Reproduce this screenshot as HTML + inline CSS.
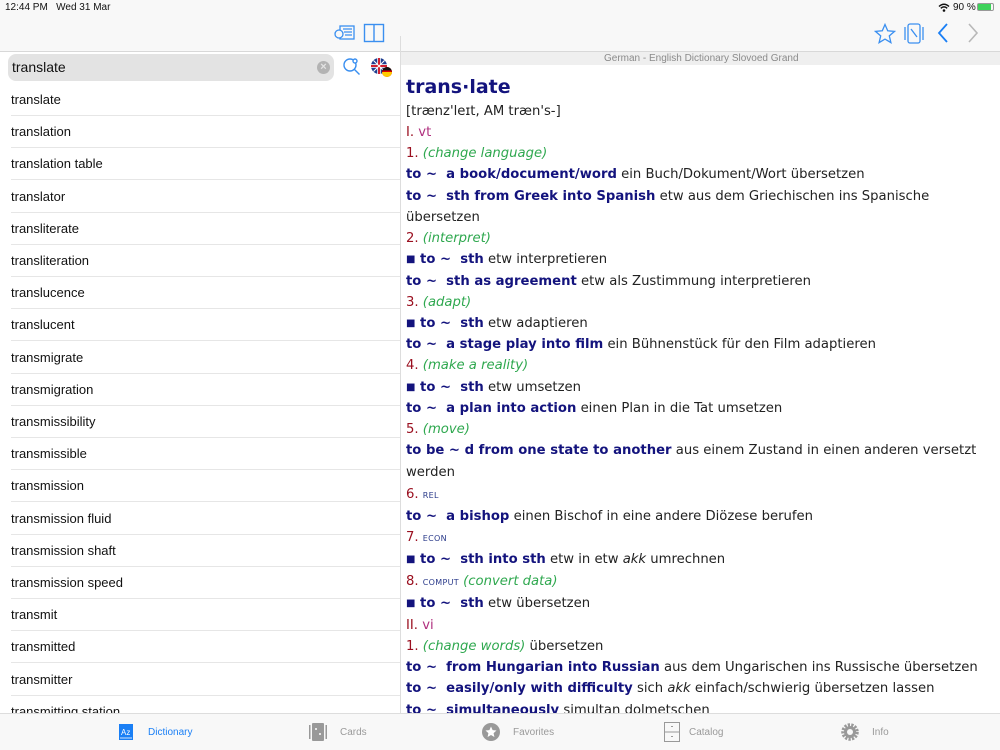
<!DOCTYPE html>
<html><head><meta charset="utf-8"><style>
*{margin:0;padding:0;box-sizing:border-box}
body{width:1000px;height:750px;overflow:hidden;background:#fff;font-family:"Liberation Sans",Arial,sans-serif;position:relative}
.abs{position:absolute}
.top{left:0;top:0;width:1000px;height:52px;background:#f8f8f8;border-bottom:1px solid #d8d8d8}
.status{font-size:10px;color:#111;top:2px}
.sub{left:401px;top:52px;width:599px;height:13px;background:#efefef;font-size:10px;color:#8a8a8a;line-height:13px;padding-left:203px}
.vsep{left:400px;top:36px;width:1px;height:678px;background:#ddd}
.search{left:8px;top:54px;width:326px;height:27px;background:#e3e3e3;border-radius:8px;font-size:14px;line-height:27px;padding-left:4px;color:#111}
.row{left:11px;width:389px;height:32.2px;border-bottom:1px solid #e6e6e6;font-size:13px;line-height:32px;color:#111}
.d{left:406px;font-family:"DejaVu Sans",Verdana,sans-serif;font-size:13.2px;line-height:21px;height:21px;color:#222;white-space:nowrap}
.b{color:#13137d;font-weight:bold}
.sq{font-size:10px;vertical-align:1px}
.n{color:#9a1020}
.g{color:#2fa84f;font-style:italic}
.m{color:#b0307f}
.sc{color:#2a3a8a;font-size:8px;letter-spacing:.3px}
.tab{top:713px;left:0;width:1000px;height:37px;background:#f8f8f8;border-top:1px solid #ddd}
.tl{font-size:10px;color:#9a9a9a;top:727px}
</style></head><body>
<div class="abs top"></div>
<div class="abs status" style="left:5px">12:44 PM&nbsp;&nbsp;&nbsp;Wed 31 Mar</div>
<div class="abs status" style="left:953px">90 %</div>
<svg class="abs" style="left:938px;top:3px" width="12" height="9" viewBox="0 0 12 9"><path d="M1 3.5Q6 -1 11 3.5M2.8 5.3Q6 2.5 9.2 5.3" stroke="#111" stroke-width="1.5" fill="none"/><circle cx="6" cy="7.5" r="1.3" fill="#111"/></svg>
<div class="abs" style="left:977px;top:3px;width:17px;height:8px;border:1px solid #999;border-radius:2px"><div style="width:13px;height:6px;background:#3dd25a;margin:0;"></div></div>
<svg class="abs" style="left:334px;top:24px" width="22" height="18" viewBox="0 0 22 18" fill="none" stroke="#3a8ff0" stroke-width="1.3"><rect x="6" y="2" width="14" height="13"/><path d="M9 5h9M10 8h8M11 11h7"/><circle cx="5" cy="10" r="4" fill="#f8f8f8"/></svg>
<svg class="abs" style="left:363px;top:23px" width="22" height="20" viewBox="0 0 22 20" fill="none" stroke="#3a8ff0" stroke-width="1.4"><rect x="1.5" y="1.5" width="19" height="17"/><path d="M11 1.5v17"/></svg>
<svg class="abs" style="left:874px;top:23px" width="22" height="21" viewBox="0 0 22 21"><path d="M11 1.5l2.7 6.3 6.8.6-5.2 4.5 1.6 6.7L11 16.1l-5.9 3.5 1.6-6.7-5.2-4.5 6.8-.6z" fill="none" stroke="#3a8ff0" stroke-width="1.3"/></svg>
<svg class="abs" style="left:904px;top:23px" width="20" height="21" viewBox="0 0 20 21" fill="none" stroke="#3a8ff0" stroke-width="1.3"><rect x="4" y="1" width="12" height="19" rx="2"/><path d="M1 4v13M19 4v13M7 6l6 8"/></svg>
<svg class="abs" style="left:937px;top:23px" width="12" height="20" viewBox="0 0 12 20"><path d="M10 1L2 10l8 9" stroke="#1a7ff5" stroke-width="1.8" fill="none"/></svg>
<svg class="abs" style="left:967px;top:23px" width="12" height="20" viewBox="0 0 12 20"><path d="M2 1l8 9-8 9" stroke="#b8b8b8" stroke-width="1.6" fill="none"/></svg>
<div class="abs sub">German - English Dictionary Slovoed Grand</div>
<div class="abs vsep"></div>
<div class="abs search">translate</div>
<div class="abs" style="left:317px;top:61px;width:13px;height:13px;border-radius:50%;background:#b3b3b3;color:#e3e3e3;font-size:11px;line-height:13px;text-align:center;font-weight:bold">×</div>
<svg class="abs" style="left:342px;top:57px" width="20" height="20" viewBox="0 0 20 20" fill="none" stroke="#3a8ff0" stroke-width="1.4"><circle cx="8" cy="8" r="6"/><path d="M12.5 12.5l5 5"/><circle cx="13" cy="4" r="2" fill="#fff"/></svg>
<svg class="abs" style="left:370px;top:57px" width="24" height="22" viewBox="0 0 24 22"><circle cx="9" cy="9" r="8" fill="#1f3e8f"/><path d="M1 9h16M9 1v16" stroke="#fff" stroke-width="3.5"/><path d="M1 9h16M9 1v16" stroke="#d02030" stroke-width="2"/><path d="M3.5 3.5l11 11M14.5 3.5l-11 11" stroke="#fff" stroke-width="1"/><circle cx="17" cy="15" r="5" fill="#d00"/><path d="M12 15a5 5 0 0 1 10 0z" fill="#111"/><path d="M12 15h10a5 5 0 0 1-10 0" fill="#fc0"/><path d="M12.3 13.5h9.4v1.5h-9.4z" fill="#d00"/></svg>

<div class="abs row" style="top:84px">translate</div>
<div class="abs row" style="top:116px">translation</div>
<div class="abs row" style="top:148px">translation table</div>
<div class="abs row" style="top:180.5px">translator</div>
<div class="abs row" style="top:212.5px">transliterate</div>
<div class="abs row" style="top:245px">transliteration</div>
<div class="abs row" style="top:277px">translucence</div>
<div class="abs row" style="top:309px">translucent</div>
<div class="abs row" style="top:341.5px">transmigrate</div>
<div class="abs row" style="top:373.5px">transmigration</div>
<div class="abs row" style="top:406px">transmissibility</div>
<div class="abs row" style="top:438px">transmissible</div>
<div class="abs row" style="top:470px">transmission</div>
<div class="abs row" style="top:502.5px">transmission fluid</div>
<div class="abs row" style="top:534.5px">transmission shaft</div>
<div class="abs row" style="top:567px">transmission speed</div>
<div class="abs row" style="top:599px">transmit</div>
<div class="abs row" style="top:631px">transmitted</div>
<div class="abs row" style="top:663.5px">transmitter</div>
<div class="abs row" style="top:695.5px">transmitting station</div>

<div class="abs d b" style="top:75px;font-size:19px;line-height:24px;height:24px">trans·late</div>
<div class="abs d" style="top:101px">[trænz'leɪt, AM træn's-]</div>
<div class="abs d" style="top:122px"><span class="n">I.</span> <span class="m">vt</span></div>
<div class="abs d" style="top:143px"><span class="n">1.</span> <span class="g">(change language)</span></div>
<div class="abs d" style="top:164px"><span class="b">to ~&nbsp; a book/document/word</span> ein Buch/Dokument/Wort übersetzen</div>
<div class="abs d" style="top:186px"><span class="b">to ~&nbsp; sth from Greek into Spanish</span> etw aus dem Griechischen ins Spanische</div>
<div class="abs d" style="top:207px">übersetzen</div>
<div class="abs d" style="top:228px"><span class="n">2.</span> <span class="g">(interpret)</span></div>
<div class="abs d" style="top:249px"><span class="b"><span class="sq">■</span> to ~&nbsp; sth</span> etw interpretieren</div>
<div class="abs d" style="top:271px"><span class="b">to ~&nbsp; sth as agreement</span> etw als Zustimmung interpretieren</div>
<div class="abs d" style="top:292px"><span class="n">3.</span> <span class="g">(adapt)</span></div>
<div class="abs d" style="top:313px"><span class="b"><span class="sq">■</span> to ~&nbsp; sth</span> etw adaptieren</div>
<div class="abs d" style="top:334px"><span class="b">to ~&nbsp; a stage play into film</span> ein Bühnenstück für den Film adaptieren</div>
<div class="abs d" style="top:355px"><span class="n">4.</span> <span class="g">(make a reality)</span></div>
<div class="abs d" style="top:377px"><span class="b"><span class="sq">■</span> to ~&nbsp; sth</span> etw umsetzen</div>
<div class="abs d" style="top:398px"><span class="b">to ~&nbsp; a plan into action</span> einen Plan in die Tat umsetzen</div>
<div class="abs d" style="top:419px"><span class="n">5.</span> <span class="g">(move)</span></div>
<div class="abs d" style="top:440px"><span class="b">to be ~ d from one state to another</span> aus einem Zustand in einen anderen versetzt</div>
<div class="abs d" style="top:462px">werden</div>
<div class="abs d" style="top:484px"><span class="n">6.</span> <span class="sc">REL</span></div>
<div class="abs d" style="top:506px"><span class="b">to ~&nbsp; a bishop</span> einen Bischof in eine andere Diözese berufen</div>
<div class="abs d" style="top:527px"><span class="n">7.</span> <span class="sc">ECON</span></div>
<div class="abs d" style="top:549px"><span class="b"><span class="sq">■</span> to ~&nbsp; sth into sth</span> etw in etw <i>akk</i> umrechnen</div>
<div class="abs d" style="top:571px"><span class="n">8.</span> <span class="sc">COMPUT</span> <span class="g">(convert data)</span></div>
<div class="abs d" style="top:593px"><span class="b"><span class="sq">■</span> to ~&nbsp; sth</span> etw übersetzen</div>
<div class="abs d" style="top:615px"><span class="n">II.</span> <span class="m">vi</span></div>
<div class="abs d" style="top:636px"><span class="n">1.</span> <span class="g">(change words)</span> übersetzen</div>
<div class="abs d" style="top:657px"><span class="b">to ~&nbsp; from Hungarian into Russian</span> aus dem Ungarischen ins Russische übersetzen</div>
<div class="abs d" style="top:678px"><span class="b">to ~&nbsp; easily/only with difficulty</span> sich <i>akk</i> einfach/schwierig übersetzen lassen</div>
<div class="abs d" style="top:700px"><span class="b">to ~&nbsp; simultaneously</span> simultan dolmetschen</div>

<div class="abs tab"></div>
<svg class="abs" style="left:118px;top:723px" width="16" height="18" viewBox="0 0 16 18"><rect x="1" y="1" width="14" height="16" fill="#1a7ff5"/><text x="3" y="12" font-size="8" fill="#fff" font-family="Liberation Sans">Az</text><path d="M2 15h12" stroke="#fff" stroke-width=".8"/></svg>
<div class="abs tl" style="left:148px;color:#1a7ff5">Dictionary</div>
<svg class="abs" style="left:309px;top:723px" width="18" height="18" viewBox="0 0 18 18"><rect x="3" y="0" width="12" height="18" rx="1" fill="#999"/><rect x="0" y="2" width="1.5" height="14" fill="#999"/><rect x="16.5" y="2" width="1.5" height="14" fill="#999"/><circle cx="7" cy="6" r="1" fill="#fff"/><circle cx="11" cy="11" r="1" fill="#fff"/></svg>
<div class="abs tl" style="left:340px">Cards</div>
<svg class="abs" style="left:482px;top:723px" width="18" height="18" viewBox="0 0 18 18"><circle cx="9" cy="9" r="9" fill="#999"/><path d="M9 3.5l1.6 3.6 3.9.4-2.9 2.6.8 3.9L9 12l-3.4 2 .8-3.9-2.9-2.6 3.9-.4z" fill="#fff"/></svg>
<div class="abs tl" style="left:513px">Favorites</div>
<svg class="abs" style="left:664px;top:722px" width="16" height="20" viewBox="0 0 16 20" fill="#f8f8f8" stroke="#999"><rect x=".5" y=".5" width="15" height="19"/><path d="M.5 10h15"/><rect x="7" y="4" width="2" height="1" fill="#999" stroke="none"/><rect x="7" y="14" width="2" height="1" fill="#999" stroke="none"/></svg>
<div class="abs tl" style="left:689px">Catalog</div>
<svg class="abs" style="left:841px;top:723px" width="18" height="18" viewBox="0 0 18 18"><circle cx="9" cy="9" r="7" fill="none" stroke="#999" stroke-width="3.5" stroke-dasharray="2.2 1.2"/><circle cx="9" cy="9" r="6" fill="#999"/><circle cx="9" cy="9" r="3" fill="#f8f8f8"/></svg>
<div class="abs tl" style="left:872px">Info</div>
</body></html>
